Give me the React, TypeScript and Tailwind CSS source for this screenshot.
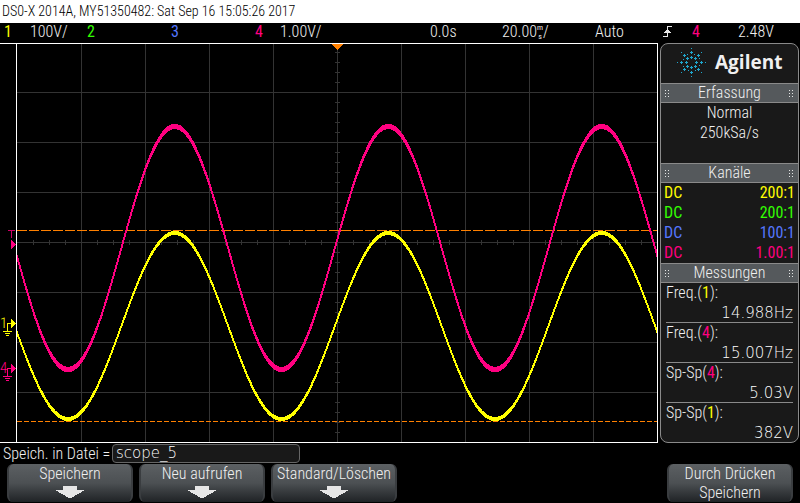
import React from 'react';

const NARROW = "font-['Roboto_Condensed','Liberation_Sans_Narrow',sans-serif] font-light";
const WIDE = "font-['DejaVu_Sans',sans-serif] font-extralight text-white";

const PINK = '#ff0080';
const YELLOW = '#ffff00';

const channels = [
  { coupling: 'DC', ratio: '200:1', color: 'text-[#ffff00]' },
  { coupling: 'DC', ratio: '200:1', color: 'text-[#33ff00]' },
  { coupling: 'DC', ratio: '100:1', color: 'text-[#5577ff]' },
  { coupling: 'DC', ratio: '1.00:1', color: 'text-[#ff0080]' },
];

const measurements = [
  { label: 'Freq.', channel: '1', color: 'text-[#ffff00]', value: '14.988Hz' },
  { label: 'Freq.', channel: '4', color: 'text-[#ff0080]', value: '15.007Hz' },
  { label: 'Sp-Sp', channel: '4', color: 'text-[#ff0080]', value: '5.03V' },
  { label: 'Sp-Sp', channel: '1', color: 'text-[#ffff00]', value: '382V' },
];

// One vertical stroke per pixel column, a little thicker at the crests
const tracePath = (center: number, amplitude: number, trough: number, half: number) => {
  const phase = (x: number) => ((x - trough) * 2 * Math.PI) / 213.5;
  const y = (x: number) => center + amplitude * Math.cos(phase(x));
  let d = '';
  for (let x = 17; x < 657; x++) {
    const pad = half * (1 - 0.3 * Math.abs(Math.sin(phase(x))));
    const top = Math.round(Math.min(y(x), y(x + 1)) - pad);
    const bottom = Math.round(Math.max(y(x), y(x + 1)) + pad);
    d += `M${x} ${top}h1V${bottom}h-1z`;
  }
  return d;
};

const range = (from: number, to: number, step: number) => {
  const out: number[] = [];
  for (let v = from; v <= to; v += step) out.push(v);
  return out;
};

const gridPath =
  range(81, 593, 64).map((x) => `M${x} 1h1v398h-1z`).join('') +
  range(49, 349, 50).map((y) => `M17 ${y}h640v1h-640z`).join('') +
  range(33, 641, 16).map((x) => `M${x} 197h1v5h-1z`).join('') +
  range(9, 389, 10).map((y) => `M335 ${y}h5v1h-5z`).join('');

const GroundMarker = ({ y, label, color }: { y: number; label: string; color: string }) => (
  <g fill={color}>
    <text x="0" y={y + 5} fontSize="15">{label}</text>
    <path d={`M7 ${y}h5v1h-5zM7 ${y}h1v8h-1zM3 ${y + 8}h9v1h-9zM5 ${y + 10}h5v1h-5zM6 ${y + 12}h3v1h-3z`} />
    <path d={`M11 ${y - 4}v9l5 -4v-1z`} />
  </g>
);

const Graticule = () => (
  <svg
    viewBox="0 0 658 400"
    preserveAspectRatio="none"
    shapeRendering="crispEdges"
    className={`block w-full h-[400px] ${NARROW}`}
    role="img"
    aria-label="Oscilloscope traces"
  >
    <path d={gridPath} fill="#333333" />
    <path d="M17 187.5H657" stroke="#ff8000" strokeDasharray="10 2" />
    <path d="M17 378.5H657" stroke="#ff8000" strokeDasharray="5 2" />
    <path d={tracePath(283, 93, 68, 2)} fill={YELLOW} />
    <path d={tracePath(205, 121.5, 68, 2.6)} fill={PINK} />
    <path d="M0 0H658V400H0V399H16V1H0ZM17 1V399H657V1Z" fill="#ffffff" fillRule="evenodd" />
    <path d="M332 1h11l-5 6h-1z" fill="#ff8000" />
    <path d="M8 187h7v1h-3v7h-1v-7h-3z" fill="#cc0066" />
    <path d="M11 197v9l5 -4v-1z" fill={PINK} />
    <GroundMarker y={280} label="1" color={YELLOW} />
    <GroundMarker y={325} label="4" color={PINK} />
  </svg>
);

const EdgeIcon = () => (
  <svg width="9" height="12" viewBox="0 0 9 12" shapeRendering="crispEdges" aria-hidden="true">
    <path d="M0 10h5v1h-5zM4 0h1v11h-1zM4 0h5v1h-5zM4 3h1v1h1v1h1v1h1v1h-7v-1h1v-1h1v-1h1z" fill="#e6e6e6" />
  </svg>
);

const AgilentLogo = () => (
  <svg width="31" height="31" viewBox="-15 -15 31 31" className="shrink-0" fill="#1fa8cf" shapeRendering="crispEdges" aria-hidden="true">
    {range(0, 315, 45).map((deg) => {
      const c = Math.cos((deg * Math.PI) / 180);
      const s = Math.sin((deg * Math.PI) / 180);
      const inner = [Math.round(c * 5), Math.round(s * 5)];
      const mid = [Math.round(c * 10), Math.round(s * 10)];
      const outer = [Math.round(c * 14), Math.round(s * 14)];
      return (
        <path
          key={deg}
          d={
            `M${inner[0] - 1} ${inner[1]}h3v1h-3zM${inner[0]} ${inner[1] - 1}h1v3h-1z` +
            `M${mid[0] - 1} ${mid[1]}h3v1h-3zM${mid[0]} ${mid[1] - 1}h1v3h-1z` +
            `M${outer[0]} ${outer[1]}h1v1h-1z`
          }
        />
      );
    })}
    {range(22, 338, 45).map((deg) => {
      const x = Math.round(Math.cos((deg * Math.PI) / 180) * 9);
      const y = Math.round(Math.sin((deg * Math.PI) / 180) * 9);
      return <path key={deg} d={`M${x} ${y}h1v1h-1z`} />;
    })}
  </svg>
);

const Grip = () => (
  <svg width="5" height="7" viewBox="0 0 5 7" shapeRendering="crispEdges" aria-hidden="true">
    <path d="M0 0h1v1h-1zM3 0h1v1h-1zM0 3h1v1h-1zM3 3h1v1h-1zM0 6h1v1h-1zM3 6h1v1h-1z" fill="#e6e6e6" />
  </svg>
);

const PanelHeader = ({ title }: { title: string }) => (
  <h2 className="flex h-5 items-center justify-between border-y border-[#8a8a8a] bg-[#55595c] px-1">
    <Grip />
    <span className="leading-[18px]">{title}</span>
    <Grip />
  </h2>
);

const SoftKey = ({ label, second }: { label: string; second?: string }) => (
  <button
    type="button"
    className="flex h-[38px] w-[126px] flex-col items-center rounded-md border-x-2 border-[#3a3d40] bg-linear-to-b from-[#5c6063] via-[#4c5053] to-[#202326] leading-[19px]"
  >
    <span>{label}</span>
    {second ? (
      <span>{second}</span>
    ) : (
      <svg width="30" height="12" viewBox="0 0 30 12" className="mt-[3px]" shapeRendering="crispEdges" aria-hidden="true">
        <path d="M8 0h14v4h8l-14 8h-2l-14 -8h8z" fill="#e6e6e6" />
      </svg>
    )}
  </button>
);

const App: React.FC = () => {
  return (
    <div className={`bg-black text-[16px] leading-[19px] text-[#f0f0f0] ${NARROW}`}>
      {/* Title line */}
      <h1 className="h-[23px] overflow-hidden bg-white pl-[2px] text-[14px] leading-[23px] whitespace-nowrap text-black">
        DS0-X 2014A, MY51350482: Sat Sep 16 15:05:26 2017
      </h1>

      {/* Channel and timebase status */}
      <div className="grid h-5 grid-cols-[26fr_57fr_84fr_84fr_25fr_150fr_72fr_93fr_68fr_29fr_46fr_62fr] pl-1 leading-[18px] whitespace-nowrap">
        <span className="font-normal text-[#ffff00]">1</span>
        <span>100V/</span>
        <span className="font-normal text-[#33ff00]">2</span>
        <span className="font-normal text-[#5577ff]">3</span>
        <span className="font-normal text-[#ff0080]">4</span>
        <span>1.00V/</span>
        <span>0.0s</span>
        <span className="flex">
          20.00
          <span className="flex flex-col items-center text-[8px] leading-[9px] font-normal">
            <span>m</span>
            <span>s</span>
          </span>
          /
        </span>
        <span>Auto</span>
        <span className="pt-[3px]"><EdgeIcon /></span>
        <span className="font-normal text-[#ff0080]">4</span>
        <span>2.48V</span>
      </div>

      <main className="flex">
        <div className="min-w-0 flex-1">
          <Graticule />
        </div>

        {/* Side panel */}
        <aside className="mr-px ml-[2px] h-[400px] w-[139px] overflow-hidden rounded-lg border border-[#8a8a8a] bg-[#191919]">
          <div className="flex h-[39px] items-center gap-2 pb-[2px] pl-[15px]">
            <AgilentLogo />
            <span className="font-['Open_Sans',sans-serif] text-[19px] font-bold">Agilent</span>
          </div>

          <PanelHeader title="Erfassung" />
          <div className="h-[60px] text-center leading-5">
            <p>Normal</p>
            <p>250kSa/s</p>
          </div>

          <PanelHeader title="Kanäle" />
          <ul>
            {channels.map((ch, i) => (
              <li key={i} className={`flex h-5 justify-between px-[3px] font-normal ${ch.color}`}>
                <span>{ch.coupling}</span>
                <span>{ch.ratio}</span>
              </li>
            ))}
          </ul>

          <PanelHeader title="Messungen" />
          <dl className="px-[5px]">
            {measurements.map((m, i) => (
              <div key={i} className="h-10 border-b border-[#8a8a8a] last:border-0">
                <dt>
                  {m.label}(<span className={`font-normal ${m.color}`}>{m.channel}</span>):
                </dt>
                <dd className={`text-right text-[15px] leading-[22px] ${WIDE}`}>{m.value}</dd>
              </div>
            ))}
          </dl>
        </aside>
      </main>

      {/* File name */}
      <div className="flex h-5 items-center gap-1 pl-[3px]">
        <label htmlFor="filename" className="w-[105px] whitespace-nowrap">Speich. in Datei =</label>
        <input
          id="filename"
          defaultValue="scope_5"
          className={`h-[19px] w-[188px] rounded-sm border border-[#666666] bg-[#191919] px-[3px] text-[15px] outline-none ${WIDE}`}
        />
      </div>

      {/* Softkeys */}
      <div className="flex gap-[6px] px-[7px] pt-px pb-px">
        <SoftKey label="Speichern" />
        <SoftKey label="Neu aufrufen" />
        <SoftKey label="Standard/Löschen" />
        <div className="ml-auto">
          <SoftKey label="Durch Drücken" second="Speichern" />
        </div>
      </div>
    </div>
  );
};

export default App;
